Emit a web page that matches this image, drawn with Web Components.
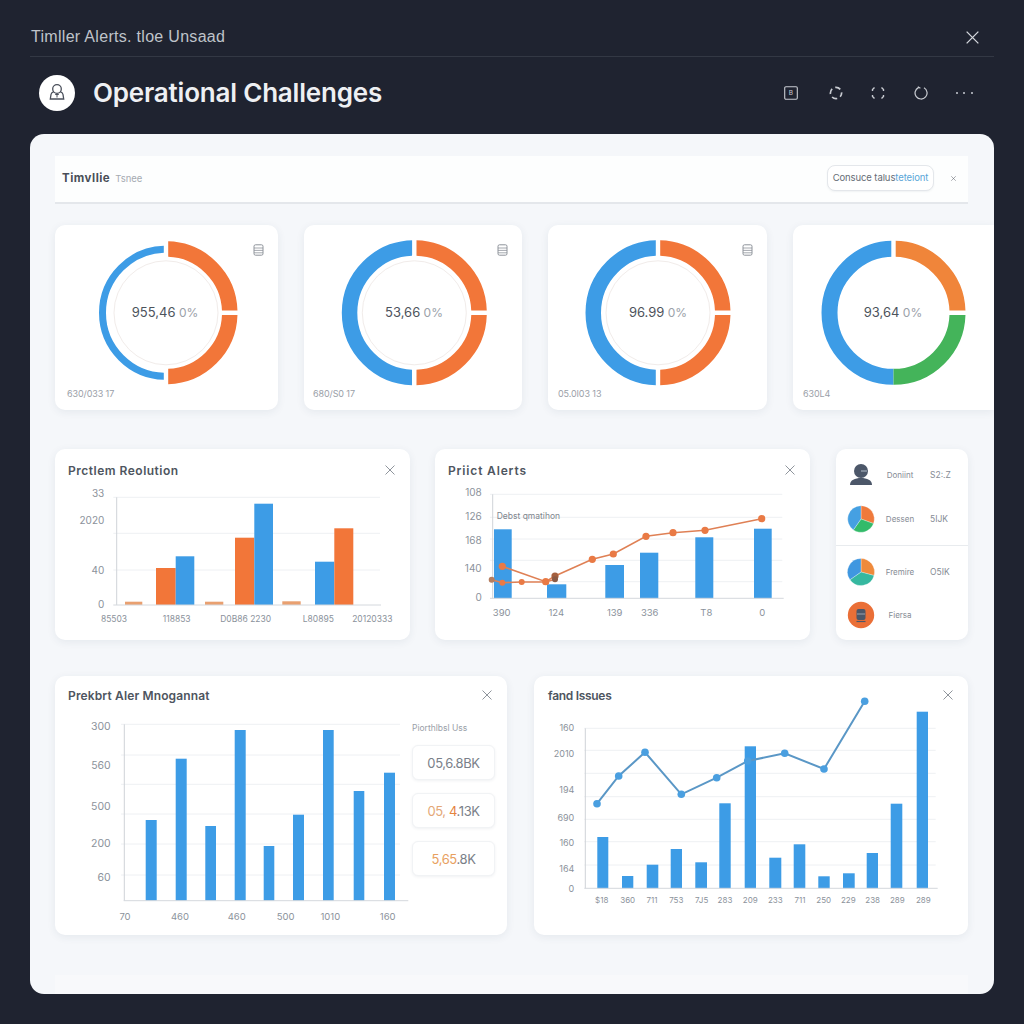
<!DOCTYPE html>
<html><head><meta charset="utf-8">
<style>
html,body{margin:0;padding:0;background:#1f2330;font-family:Inter,"Liberation Sans",sans-serif;}
</style></head>
<body>
<dash-app></dash-app>
<script>
const BLUE='#3d9ce6',OR='#f27639',GR='#44b45a',AX='#d4d8dd',GL='#eef0f3',LB='#8b929b';
const XICON=(s,c,w=1.1)=>`<svg width="${s}" height="${s}" viewBox="0 0 10 10" fill="none" stroke="${c}" stroke-width="${w}"><path d="M.5.5l9 9M9.5.5l-9 9"/></svg>`;

class Base extends HTMLElement{
  constructor(){super();this.attachShadow({mode:'open'});}
  connectedCallback(){this.shadowRoot.innerHTML=this.render();}
}
const def=(n,f)=>customElements.define(n,class extends Base{render(){return f(this);}});

def('dash-title',()=>`<style>:host{display:flex;align-items:center;justify-content:space-between;border-bottom:1px solid #333844;padding:18px 15px 0 1px;box-sizing:border-box;height:57px;color:#bfc3ca}
span{font:300 16px/1 "Liberation Sans",Inter,sans-serif;letter-spacing:.3px}</style>
<span>Timller Alerts. tloe Unsaad</span>${XICON(13,'#d5d8dd',1)}`);

const HI={
 a:`<rect x=".7" y=".7" width="12.600" height="12.600" rx="1.200"/><text x="7" y="9.300" text-anchor="middle" font-family="Inter,sans-serif" font-size="6.500" fill="#c9ccd2" stroke="none">B</text>`,
 b:`<circle cx="7" cy="7" r="5.600" stroke-width="1.700" stroke-dasharray="5.500 3.300" stroke-dashoffset="1.500"/>`,
 c:`<path d="M1.500 5V3.500L3.500 1.500M10.500 1.500l2 2V5M12.500 9v1.500l-2 2M3.500 12.500l-2-2V9" stroke-width="1.400"/>`,
 d:`<path d="M4.500 1.600A6 6 0 1 0 10 1.800M3.800.8l2.600 1.500" stroke-width="1.200"/>`
};
def('dash-header',()=>`<style>:host{display:flex;align-items:center;height:77px;padding:0 0 5px 9px;box-sizing:border-box}
.logo{width:36px;height:36px;border-radius:50%;background:#fff;display:flex;align-items:center;justify-content:center;margin-right:18px;flex:none}
h1{margin:0;font:600 26px/1 Inter,sans-serif;color:#eef0f3;flex:1;letter-spacing:-.2px}
.ic{display:flex;align-items:center;margin-right:21.500px}
.ic svg{display:block;fill:none;stroke:#c9ccd2;stroke-width:1.100}
.dots{display:flex;gap:5.500px}.dots i{width:2px;height:2px;border-radius:50%;background:#c9ccd2}</style>
<div class="logo"><svg width="20" height="20" viewBox="0 0 20 20" fill="none" stroke="#4a4f5b" stroke-width="1.300"><circle cx="10" cy="6" r="4.300"/><path d="M6.500 8.800C5 9.300 4.200 10 4 11.500L3.300 16h13.400L16 11.500c-.2-1.500-1-2.200-2.500-2.700"/><path d="M8.200 11.500h3.600M10 11.500v3" stroke-width="1"/></svg></div>
<h1>Operational Challenges</h1>
<div class="ic">
<svg width="14" height="14" viewBox="0 0 14 14">${HI.a}</svg>
<svg style="margin-left:31px" width="14" height="14" viewBox="0 0 14 14">${HI.b}</svg>
<svg style="margin-left:28px" width="14" height="14" viewBox="0 0 14 14">${HI.c}</svg>
<svg style="margin-left:29px" width="14" height="14" viewBox="0 0 14 14">${HI.d}</svg>
<div class="dots" style="margin-left:27.500px"><i></i><i></i><i></i></div>
</div>`);

def('tool-bar',()=>`<style>:host{display:flex;align-items:center;height:48px;box-sizing:border-box;background:#fdfefe;border-bottom:2px solid #e4e7eb;padding:0 12px 2px 7px;flex:none}
b{font:700 11.500px Inter,sans-serif;color:#4a4f58;letter-spacing:.5px}
.s{font:400 9.500px Inter,sans-serif;color:#a6abb2;margin-left:5px;flex:1}
.btn{width:107px;height:26px;box-sizing:border-box;border:1px solid #e4e7eb;border-radius:8px;background:#fff;font:400 9.500px/24px Inter,sans-serif;color:#666d76;text-align:center;white-space:nowrap;letter-spacing:-.1px;box-shadow:0 1px 2px rgba(40,60,90,.06)}
.btn em{font-style:normal;color:#5ba6d8}
svg{margin-left:17px}</style>
<b>Timvllie</b><span class="s">Tsnee</span><div class="btn">Consuce talus<em>teteiont</em></div>${XICON(5,'#555b64',1)}`);

const DOC=`<svg width="11" height="12" viewBox="0 0 11 12" fill="none" stroke="#8e939a" stroke-width="1"><rect x="1" y=".8" width="9" height="10.400" rx="1.500"/><path d="M1 4h9M1 6.400h9M1 8.800h9" stroke-width=".8"/></svg>`;
let uid=0;
customElements.define('donut-card',class extends Base{render(){
  const g=k=>this.getAttribute(k);
  const w=+g('w'),cx=+g('cx'),R=+g('r'),T=+g('t'),R2=+(g('r2')||R),T2=+(g('t2')||T),cy=87.8,kind=g('kind')||'';
  const id='c'+(++uid);
  const gap=2.2,gy=2.2;
  const ring=(r,t,c,clip)=>`<circle cx="${cx}" cy="${cy}" r="${r-t/2}" fill="none" stroke="${c}" stroke-width="${t}" clip-path="url(#${id}${clip})"/>`;
  const clips=`<defs>
  <clipPath id="${id}L"><rect x="0" y="0" width="${cx-gap}" height="200"/></clipPath>
  <clipPath id="${id}L4"><path d="M0 0H${cx-gap}V${cy}H${cx}V200H0z"/></clipPath>
  <clipPath id="${id}T"><rect x="${cx+gap}" y="0" width="200" height="${cy-gy}"/></clipPath>
  <clipPath id="${id}B"><rect x="${cx+gap}" y="${cy+gy}" width="200" height="150"/></clipPath>
  <clipPath id="${id}B4"><path d="M${cx} ${cy+gy}H300V200H${cx}z"/></clipPath></defs>`;
  const four=kind==='four';
  return `<style>:host{display:block;position:relative;box-sizing:border-box;height:185px;width:${w}px;flex:none;background:#fff;border-radius:${four?'10px 0 0 10px':'10px'};box-shadow:0 2px 8px rgba(40,60,90,.08)}
  svg.d{display:block}
  .i{position:absolute;top:15px;right:14px}
  .f{font:400 9px/12px Inter,sans-serif;color:#9aa0a8;padding-left:${g('fp')}px;margin-top:1px;letter-spacing:-.1px}
  </style>
  <svg class="d" width="${w}" height="162" viewBox="0 0 ${w} 162">${clips}
  ${g('ic')?`<circle cx="${cx}" cy="${cy}" r="52" fill="none" stroke="#f1ecea" stroke-width="1"/>`:''}
  ${four?ring(R2,T2,BLUE,'L4'):ring(R2,T2,BLUE,'L')}
  ${four?ring(R,T,'#f0853a','T'):ring(R,T,OR,'T')}
  ${four?ring(R,T,GR,'B4'):ring(R,T,OR,'B')}
  <text x="${+g('tx')}" y="92" text-anchor="middle" font-family="Inter,sans-serif" font-size="13" fill="#4d535c">${g('v')}<tspan fill="#9ba1a9" font-size="12"> ${g('p')}</tspan></text>
  </svg>
  ${g('ic')==='1'?`<div class="i">${DOC}</div>`:''}
  <div class="f">${g('f')}</div>`;
}});

customElements.define('chart-card',class extends Base{render(){
  const g=k=>this.getAttribute(k);
  return `<style>:host{display:flex;flex-direction:column;box-sizing:border-box;width:${g('w')}px;height:100%;background:#fff;border-radius:10px;box-shadow:0 2px 8px rgba(40,60,90,.08);flex:none}
  header{display:flex;align-items:center;justify-content:space-between;height:40px;flex:none;padding:${g('hp')||'2px 15px 0 13px'};box-sizing:border-box}
  h3{margin:0;font:600 12px Inter,sans-serif;color:#4e5560;letter-spacing:${g('ls')}px;white-space:nowrap}
  main{display:flex;flex:1;min-height:0}</style>
  <header><h3>${g('t')}</h3>${XICON(10,'#8f959c',1)}</header><main><slot></slot></main>`;
}});

const SPEC={
 c1:{box:[55,489,355,151],o:[45,440],grid:[172,280,390],gx:[205,1005],ax:[215,172,495],base:[205,1008,495],yx:178,fs:10,xf:8.500,
  yl:[['33',158],['2020',240],['40',390],['0',492]],xy:537,xl:[['85503',207],['118853',395],['D0B86 2230',602],['L80895',820],['20120333',982]],
  bars:[[240,292,485,'#e9a070'],[333,392,384,OR],[392,448,349,BLUE],[480,535,485,'#e9a070'],[570,628,293,OR],[628,684,191,BLUE],[712,767,484,'#e9a070'],[810,868,365,BLUE],[868,925,265,OR]]},
 c2:{box:[435,489,375,151],o:[425,440],grid:[163,232,297,361,425],gx:[195,1072],ax:[203,163,475],base:[195,1076,475],yx:170,fs:10,xf:9.500,
  yl:[['108',155],['126',228],['168',301],['140',384],['0',472]],xy:517,xl:[['390',230],['124',394],['139',569],['336',674],['T8',844],['0',1012]],
  note:['Debst qmatihon',215,227],
  bars:[[207,260,268,BLUE],[366,424,433,BLUE],[541,597,375,BLUE],[645,700,338,BLUE],[811,865,292,BLUE],[987,1040,266,BLUE]],
  lines:[{c:'#df8055',w:1.600,r:3.600,d:'#e97a45',pts:[[232,379],[362,425],[390,408,'#a5603f'],[502,358],[565,342],[663,289],[744,278],[840,271],[1010,236]]},
         {c:'#df8055',w:1.600,r:3,d:'#e97a45',pts:[[200,419,'#b57d5e'],[232,428],[290,426],[362,426],[390,418,'#8a5a45']]}]},
 c3:{box:[55,716,350,219],o:[45,670],grid:[163,255,343,432,522,615],gx:[228,1065],ax:[238,163,692],base:[236,1090,692],yx:197,fs:10.500,xf:9.500,
  yl:[['300',168],['560',285],['500',408],['200',520],['60',623]],xy:739,xl:[['70',240],['460',405],['460',575],['500',722],['1010',856],['160',1028]],
  bars:[[302,335,450],[392,425,266],[481,513,468],[569,602,180],[656,688,528],[744,777,434],[834,866,180],[926,958,363],[1017,1050,308]].map(b=>[...b,BLUE])},
 c4:{box:[534,716,434,219],o:[525,670],grid:[175,241,310,380,448,515,585],gx:[178,1232],ax:[181,175,655],base:[178,1238,655],yx:148,fs:9,xf:8,
  yl:[['160',172],['2010',250],['194',357],['690',441],['160',516],['164',596],['0',656]],xy:691,xl:[['$18',230],['360',308],['711',381],['753',454],['7J5',530],['283',600],['209',676],['233',751],['711',825],['250',896],['229',970],['238',1043],['289',1117],['289',1195]],
  bars:[[217,250,501],[291,325,618],[365,400,584],[437,471,537],[511,546,577],[583,617,400],[659,693,229],[733,769,563],[806,841,523],[880,914,619],[954,989,610],[1025,1059,549],[1097,1132,401],[1175,1209,125]].map(b=>[...b,BLUE]),
  lines:[{c:'#5a97c6',w:2,r:3.800,d:'#4a9fe0',pts:[[216,401],[281,318],[360,247],[469,373],[575,323],[668,273],[779,250],[897,297],[1019,94]]}]}
};
customElements.define('plot-view',class extends Base{render(){
  const s=SPEC[this.getAttribute('name')],[ox,oy]=s.o,X=x=>+(x/3+ox).toFixed(1),Y=y=>+(y/3+oy).toFixed(1),[bx,by,bw,bh]=s.box;
  let h='';
  for(const g of s.grid)h+=`<path d="M${X(s.gx[0])} ${Y(g)}H${X(s.gx[1])}" stroke="${GL}"/>`;
  for(const b of s.bars)h+=`<rect x="${X(b[0])}" y="${Y(b[2])}" width="${+(X(b[1])-X(b[0])).toFixed(1)}" height="${+(Y(s.base[2])-Y(b[2])).toFixed(1)}" fill="${b[3]}"/>`;
  h+=`<path d="M${X(s.ax[0])} ${Y(s.ax[1])}V${Y(s.ax[2])}" stroke="#cfd3d8"/><path d="M${X(s.base[0])} ${Y(s.base[2])}H${X(s.base[1])}" stroke="${AX}"/>`;
  for(const l of s.lines||[]){
    h+=`<polyline fill="none" stroke="${l.c}" stroke-width="${l.w}" points="${l.pts.map(p=>X(p[0])+','+Y(p[1])).join(' ')}"/>`;
    for(const p of l.pts)h+=`<circle cx="${X(p[0])}" cy="${Y(p[1])}" r="${l.r}" fill="${p[2]||l.d}"/>`;
  }
  const tx=(t,x,y,a,f=s.fs,c=LB)=>`<text x="${x}" y="${y}" text-anchor="${a}" dominant-baseline="central" font-family="Inter,sans-serif" font-size="${f}" fill="${c}">${t}</text>`;
  for(const [t,y] of s.yl)h+=tx(t,X(s.yx),Y(y),'end');
  for(const [t,x] of s.xl)h+=tx(t,X(x),Y(s.xy),'middle',s.xf);
  if(s.note)h+=tx(s.note[0],X(s.note[1]),Y(s.note[2]),'start',8.500,'#80868e');
  return `<style>:host{display:block;flex:none;width:${bw}px;height:${bh}px}svg{display:block;overflow:visible}</style>
  <svg width="${bw}" height="${bh}" viewBox="${bx} ${by} ${bw} ${bh}">${h}</svg>`;
}});

def('stat-box',t=>`<style>:host{display:flex;align-items:center;justify-content:center;height:35px;border-radius:6px;background:#fff;border:1px solid #f1f3f5;box-sizing:border-box;box-shadow:0 1px 3px rgba(40,60,90,.07);font:400 13px Inter,sans-serif;color:#7a8089;letter-spacing:-.4px;white-space:nowrap}</style><slot></slot>`);

def('stat-col',()=>`<style>:host{display:flex;flex-direction:column;gap:13px;width:83px;margin-left:7px;padding-top:6px;box-sizing:border-box}
p{margin:0 0 -2px;font:400 8.500px/12px Inter,sans-serif;color:#9aa0a8;white-space:nowrap}</style><p>Piorthlbsl Uss</p><slot></slot>`);

const wedge=(cx,cy,r,a,b,c)=>{const P=t=>[cx+r*Math.sin(t*Math.PI/180),cy-r*Math.cos(t*Math.PI/180)];const[p,q]=[P(a),P(b)];return `<path d="M${cx} ${cy}L${p[0].toFixed(2)} ${p[1].toFixed(2)}A${r} ${r} 0 ${b-a>180?1:0} 1 ${q[0].toFixed(2)} ${q[1].toFixed(2)}z" fill="${c}" stroke="#fff" stroke-width=".3"/>`;};
customElements.define('side-row',class extends Base{render(){
  const g=k=>this.getAttribute(k),k=g('icon');
  let ic='';
  if(k==='person')ic=`<circle cx="14" cy="10" r="7" fill="#4c5769"/><path d="M3 24c0-5 5-7 11-7s11 2 11 7z" fill="#4c5769"/><path d="M14 9h6v2h-6z" fill="#7f8a99"/>`;
  if(k==='pie1')ic=wedge(14,14,13.300,0,110,'#ef7a3c')+wedge(14,14,13.300,110,215,'#33bb6a')+wedge(14,14,13.300,215,360,'#45a0e2');
  if(k==='pie2')ic=wedge(14,14,13.500,0,105,'#ef8a3c')+wedge(14,14,13.500,105,235,'#36b8a0')+wedge(14,14,13.500,235,360,'#3f97e0');
  if(k==='train')ic=`<circle cx="14" cy="14" r="13.200" fill="#ea6f37"/><rect x="9.500" y="8" width="9" height="11" rx="2" fill="#4c5769"/><path d="M10 13h8" stroke="#9aa3af"/><path d="M9.500 20.500h9" stroke="#4c5769" stroke-width="1.200"/>`;
  return `<style>:host{display:grid;grid-template-columns:28px 50px 1fr;align-items:center;flex:1;padding-left:11px;font:400 8px Inter,sans-serif;color:#858b94}
  svg{display:block} .l{text-align:center;white-space:nowrap}.v{padding-left:5px;white-space:nowrap;font-size:8.500px}</style>
  <svg width="28" height="28" viewBox="0 0 28 28">${ic}</svg><span class="l">${g('l')}</span><span class="v">${g('v')||''}</span>`;
}});
def('side-list',()=>`<style>:host{display:flex;flex-direction:column;box-sizing:border-box;width:132px;height:191px;margin-left:1px;background:#fff;border-radius:10px;box-shadow:0 2px 8px rgba(40,60,90,.08);flex:none}
.g{display:flex;flex-direction:column;padding:4px 0}.a{height:97px;box-sizing:border-box;border-bottom:1.500px solid #e8ebee}.b{flex:1}</style>
<div class="g a"><side-row icon="person" l="Doniint" v="S2:.Z"></side-row><side-row icon="pie1" l="Dessen" v="5IJK"></side-row></div>
<div class="g b"><side-row icon="pie2" l="Fremire" v="O5IK"></side-row><side-row icon="train" l="Fiersa"></side-row></div>`);

def('dash-row',t=>`<style>:host{display:flex;flex:none;height:${t.getAttribute('h')}px;gap:${t.getAttribute('g')}px;margin-top:${t.getAttribute('mt')}px;margin-right:${t.getAttribute('mr')||0}px}</style><slot></slot>`);

def('dash-panel',()=>`<style>:host{display:flex;flex-direction:column;height:860px;box-sizing:border-box;background:#f5f7fa;border-radius:14px;padding:22px 26px 0 25px;overflow:hidden}
.strip{flex:none;height:19px;margin-top:40px;background:#f8f9fb}</style><slot></slot><div class="strip"></div>`);

def('dash-app',()=>`<style>:host{display:block;height:1024px;box-sizing:border-box;padding:0 30px}</style>
<dash-title></dash-title><dash-header></dash-header>
<dash-panel>
  <tool-bar></tool-bar>
  <dash-row h="185" g="26" mt="21" mr="-26">
    <donut-card w="223" cx="111" r="71.500" t="15.500" r2="67" t2="7" tx="110" fp="12" ic="1" v="955,46" p="0%" f="630/033 17"></donut-card>
    <donut-card w="218" cx="110.300" r="72.500" t="15.500" tx="110" fp="9" ic="1" v="53,66" p="0%" f="680/S0 17"></donut-card>
    <donut-card w="219" cx="110" r="72.500" t="15.500" tx="110" fp="10" ic="1" v="96.99" p="0%" f="05.0I03 13"></donut-card>
    <donut-card w="201" cx="100.500" r="72" t="16" tx="100" fp="10" kind="four" v="93,64" p="0%" f="630L4"></donut-card>
  </dash-row>
  <dash-row h="191" g="25" mt="39">
    <chart-card w="355" ls=".5" t="Prctlem Reolution"><plot-view name="c1"></plot-view></chart-card>
    <chart-card w="375" ls=".85" t="Priict Alerts"><plot-view name="c2"></plot-view></chart-card>
    <side-list></side-list>
  </dash-row>
  <dash-row h="259" g="27" mt="36">
    <chart-card w="452" ls=".14" hp="0 15px 2px 13px" t="Prekbrt Aler Mnogannat"><plot-view name="c3"></plot-view>
      <stat-col><stat-box>05,6.8BK</stat-box><stat-box><span><span style="color:#e4a878">05,</span> <span style="color:#e5843f">4</span>.13K</span></stat-box><stat-box><span><span style="color:#e8a060">5,65</span>.8K</span></stat-box></stat-col>
    </chart-card>
    <chart-card w="434" ls="-.3" hp="0 15px 2px 14px" t="fand Issues"><plot-view name="c4"></plot-view></chart-card>
  </dash-row>
</dash-panel>`);
</script>
</body></html>
